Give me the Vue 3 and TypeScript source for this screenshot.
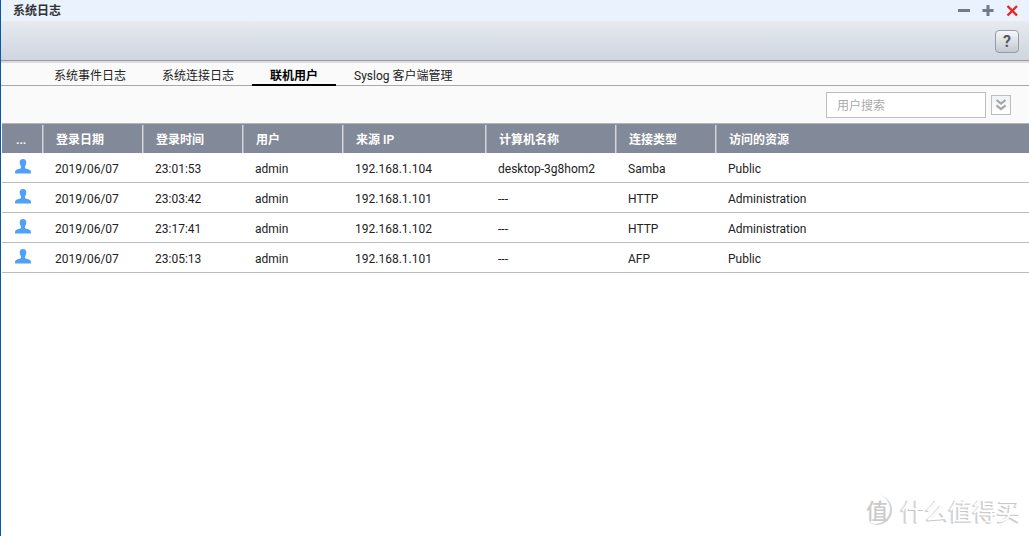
<script setup lang="ts">
import { ref, computed } from 'vue'

interface Session {
  date: string
  time: string
  user: string
  ip: string
  computer: string
  type: string
  resource: string
}

const tabs: string[] = ['系统事件日志', '系统连接日志', '联机用户', 'Syslog 客户端管理']
const activeTab = ref<number>(2)
const query = ref<string>('')

const headings: string[] = ['...', '登录日期', '登录时间', '用户', '来源 IP', '计算机名称', '连接类型', '访问的资源']

const sessions: Session[] = [
  { date: '2019/06/07', time: '23:01:53', user: 'admin', ip: '192.168.1.104', computer: 'desktop-3g8hom2', type: 'Samba', resource: 'Public' },
  { date: '2019/06/07', time: '23:03:42', user: 'admin', ip: '192.168.1.101', computer: '---', type: 'HTTP', resource: 'Administration' },
  { date: '2019/06/07', time: '23:17:41', user: 'admin', ip: '192.168.1.102', computer: '---', type: 'HTTP', resource: 'Administration' },
  { date: '2019/06/07', time: '23:05:13', user: 'admin', ip: '192.168.1.101', computer: '---', type: 'AFP', resource: 'Public' },
]

const shown = computed<Session[]>(() => sessions.filter((s) => s.user.includes(query.value)))
</script>

<template>
  <main class="window">
    <header class="titlebar">
      <h1>系统日志</h1>
      <div class="controls">
        <button type="button" aria-label="最小化">
          <svg width="12" height="12" viewBox="0 0 12 12"><path d="M0 4h12v3H0z" fill="#747b88" /></svg>
        </button>
        <button type="button" aria-label="最大化">
          <svg width="12" height="12" viewBox="0 0 12 12"><path d="M4.500 0h3v4h4v3h-4v4h-3v-4h-4v-3h4z" fill="#747b88" /></svg>
        </button>
        <button type="button" aria-label="关闭">
          <svg width="12" height="12" viewBox="0 0 12 12"><path d="M1.500 1l9.500 9.500M11 1l-9.500 9.500" stroke="#ec2226" stroke-width="2.4" fill="none" /></svg>
        </button>
      </div>
    </header>

    <div class="toolbar">
      <button type="button" class="help" aria-label="帮助">?</button>
    </div>

    <nav class="tabs">
      <button
        v-for="(tab, i) in tabs"
        :key="tab"
        type="button"
        :class="{ active: i === activeTab }"
        @click="activeTab = i"
      >{{ tab }}</button>
    </nav>

    <div class="filter">
      <input v-model="query" type="text" placeholder="用户搜索" aria-label="用户搜索" />
      <button type="button" class="more" aria-label="高级搜索">
        <svg width="12" height="14" viewBox="0 0 12 14" fill="none" stroke="#a3a5a8" stroke-width="2.2">
          <path d="M1.500 2l4.500 3.600L10.500 2M1.500 7.400l4.500 3.600 4.500-3.600" />
        </svg>
      </button>
    </div>

    <table>
      <colgroup>
        <col class="c-icon" /><col class="c-std" /><col class="c-std" /><col class="c-std" />
        <col class="c-ip" /><col class="c-name" /><col class="c-std" /><col />
      </colgroup>
      <thead>
        <tr>
          <th v-for="h in headings" :key="h" scope="col">{{ h }}</th>
        </tr>
      </thead>
      <tbody>
        <tr v-for="s in shown" :key="s.time">
          <td class="icon">
            <svg width="16" height="15" viewBox="0 0 16 15" aria-hidden="true">
              <path d="M8 0C10.300 0 11.400 1.300 11.300 3.600C11.200 5.400 10.600 6.500 10 7.500V9C11 10 13.800 10.200 15.200 11.300C15.900 12 16 13 16 14.500H0C0 13 .1 12 .8 11.300C2.200 10.200 5 10 6 9V7.500C5.400 6.500 4.800 5.400 4.700 3.600C4.600 1.300 5.700 0 8 0Z" fill="#509ff8" />
            </svg>
          </td>
          <td>{{ s.date }}</td>
          <td>{{ s.time }}</td>
          <td>{{ s.user }}</td>
          <td>{{ s.ip }}</td>
          <td>{{ s.computer }}</td>
          <td>{{ s.type }}</td>
          <td>{{ s.resource }}</td>
        </tr>
      </tbody>
    </table>

    <div class="watermark">
      <span class="seal">值</span>
      <span>什么值得买</span>
    </div>
  </main>
</template>

<style>
body {
  margin: 0;
}
</style>

<style scoped>
.window {
  position: relative;
  box-sizing: border-box;
  min-height: 100vh;
  border-left: 1px solid #0a58a8;
  background: #fff;
  color: #222;
  font: 12px/16px Roboto, "Noto Sans CJK SC", sans-serif;
}
button,
input {
  margin: 0;
  padding: 0;
  border: 0;
  background: none;
  color: inherit;
  font: inherit;
}
svg {
  display: block;
}
.titlebar {
  display: flex;
  align-items: center;
  justify-content: space-between;
  height: 21px;
  padding: 0 11px 0 12px;
  background: #e9f2fd;
}
h1 {
  margin: 0;
  padding-top: 1px;
  color: #333;
  font-size: 12px;
  line-height: 16px;
  font-weight: 600;
}
.controls {
  display: flex;
  gap: 12px;
}
.toolbar {
  display: flex;
  align-items: center;
  justify-content: flex-end;
  height: 39px;
  padding-right: 10px;
  border-bottom: 1px solid #989ba0;
  background: linear-gradient(#e7ebf0, #ced5de);
}
.help {
  box-sizing: border-box;
  width: 24px;
  height: 23px;
  margin-top: 2px;
  border: 1px solid #969ba8;
  border-radius: 4px;
  background: linear-gradient(#f6f7f9, #c4c8d0);
  color: #555a66;
  font-size: 16px;
  line-height: 20px;
  font-weight: 700;
}
.tabs {
  display: flex;
  height: 22px;
  padding-left: 35px;
  border-top: 2px solid #dcdcdc;
  border-bottom: 1px solid #a9a9a9;
  background: #fafafa;
}
.tabs button {
  height: 23px;
  padding: 5px 18px 0;
  border-bottom: 2px solid transparent;
}
.tabs .active {
  border-bottom-color: #000;
  color: #000;
  font-weight: 700;
}
.filter {
  display: flex;
  align-items: center;
  justify-content: flex-end;
  gap: 5px;
  height: 37px;
  padding-right: 18px;
  background: #fafafa;
}
.filter input {
  box-sizing: border-box;
  width: 160px;
  height: 26px;
  padding: 2px 10px 0;
  border: 1px solid #bdbdbd;
  background: #fff;
}
.filter input::placeholder {
  color: #aaa;
  opacity: 1;
}
.more {
  display: grid;
  place-items: center;
  box-sizing: border-box;
  width: 20px;
  height: 20px;
  border: 1px solid #bdbdbd;
  background: linear-gradient(#eef1f5, #fff);
}
table {
  width: calc(100% - 1px);
  margin-left: 1px;
  border-collapse: separate;
  border-spacing: 0;
  table-layout: fixed;
}
.c-icon { width: 42px; }
.c-std { width: 100px; }
.c-ip { width: 143px; }
.c-name { width: 130px; }
th {
  box-sizing: border-box;
  height: 30px;
  padding: 3px 12px 0;
  border-top: 1px solid #b4b4b4;
  background: linear-gradient(90deg, #d4d6da 1px, #a9adb7 1px) right 0 top 1px / 2px 28px no-repeat #828998;
  color: #fff;
  font-weight: 600;
  text-align: left;
  white-space: nowrap;
}
th:first-child {
  padding-left: 14px;
}
th:last-child {
  background: #828998;
}
td {
  box-sizing: border-box;
  height: 30px;
  padding: 2px 0 0 11px;
  border-bottom: 1px solid #bbb;
}
td.icon {
  padding: 0 0 2px 13px;
}
.watermark {
  position: absolute;
  right: 8px;
  bottom: 10px;
  display: flex;
  align-items: center;
  gap: 9px;
  color: #fff;
  font: 24px/32px "Noto Sans CJK SC", sans-serif;
  text-shadow: -1px 1px 0 #c8c8c8, -2px 1px 1px #d8d8d8;
}
.seal {
  box-sizing: border-box;
  width: 30px;
  height: 30px;
  border-radius: 50%;
  box-shadow: inset -2px -1px 1px #cfcfcf;
  color: #cacaca;
  font-size: 22px;
  font-weight: 500;
  line-height: 28px;
  text-align: center;
  text-shadow: none;
}
</style>
